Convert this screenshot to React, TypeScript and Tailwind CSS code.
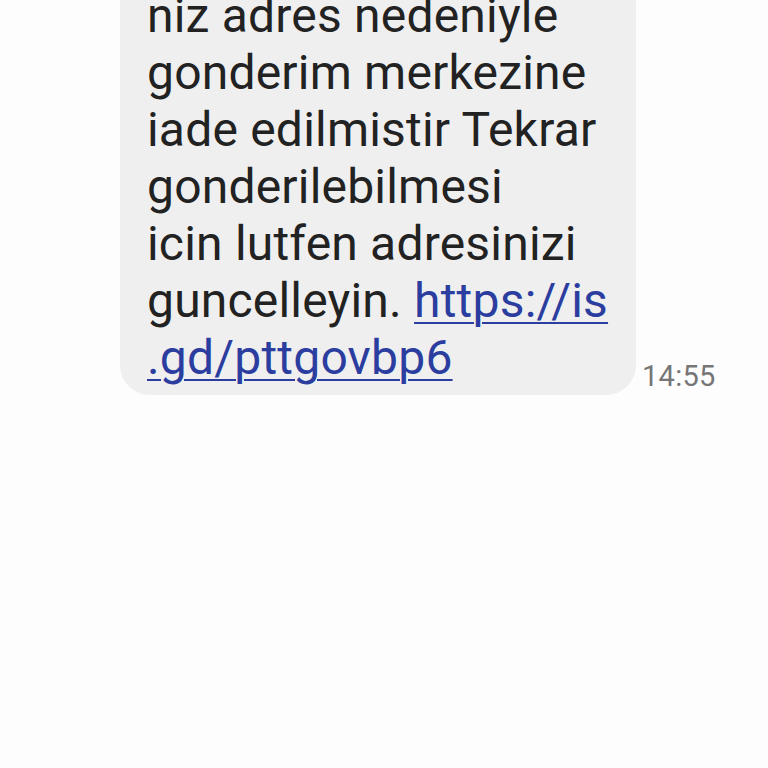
import React from "react";

const lines = [
  "niz adres nedeniyle",
  "gonderim merkezine",
  "iade edilmistir Tekrar",
  "gonderilebilmesi",
  "icin lutfen adresinizi",
];

export default function App() {
  return (
    <div
      className="w-[768px] h-[768px] bg-[#fdfdfd] overflow-hidden"
      style={{ fontFamily: "Roboto, 'Noto Sans', sans-serif" }}
    >
      <div className="flex items-end mt-[-40px]">
        <div className="ml-[120px] w-[516px] bg-[#efefef] rounded-[30px] pt-[27px] pb-[9px] pl-[27px] pr-[20px] text-[48px] leading-[57px] tracking-[0.2px] text-[#222222]">
          {lines.map((l) => (
            <div key={l} className="whitespace-nowrap">
              {l}
            </div>
          ))}
          <div className="whitespace-nowrap">
            guncelleyin.{" "}
            <span className="text-[#2b3d9f] underline decoration-[2px] underline-offset-[5px]">
              https://is
            </span>
          </div>
          <div className="whitespace-nowrap">
            <span className="text-[#2b3d9f] underline decoration-[2px] underline-offset-[5px]">
              .gd/pttgovbp6
            </span>
          </div>
        </div>
        <div className="ml-[6px] mb-[1px] text-[29px] leading-[36px] tracking-[0.3px] text-[#767676]">
          14:55
        </div>
      </div>
    </div>
  );
}
